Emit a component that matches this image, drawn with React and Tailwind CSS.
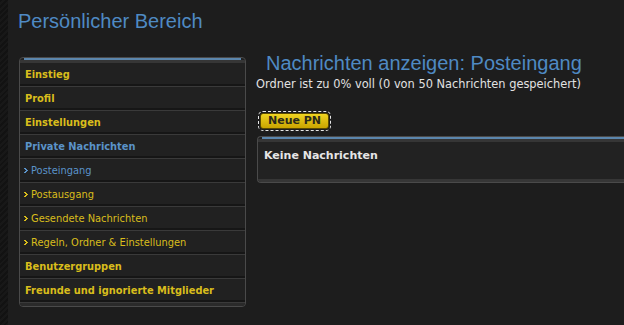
import React from "react";

const verd = { fontFamily: '"DejaVu Sans", Verdana, sans-serif' };
const treb = { fontFamily: '"Liberation Sans", Arial, sans-serif' };

function Marker({ color }) {
  return (
    <svg width="4" height="5" viewBox="0 0 4 5" className="shrink-0">
      <rect x="0" y="0" width="2" height="1" fill={color} />
      <rect x="1" y="1" width="2" height="1" fill={color} />
      <rect x="2" y="2" width="2" height="1" fill={color} />
      <rect x="1" y="3" width="2" height="1" fill={color} />
      <rect x="0" y="4" width="2" height="1" fill={color} />
    </svg>
  );
}

const items = [
  { t: "Einstieg", kind: "bold" },
  { t: "Profil", kind: "bold" },
  { t: "Einstellungen", kind: "bold" },
  { t: "Private Nachrichten", kind: "boldBlue" },
  { t: "Posteingang", kind: "subBlue" },
  { t: "Postausgang", kind: "sub" },
  { t: "Gesendete Nachrichten", kind: "sub" },
  { t: "Regeln, Ordner & Einstellungen", kind: "sub" },
  { t: "Benutzergruppen", kind: "bold" },
  { t: "Freunde und ignorierte Mitglieder", kind: "bold" },
];

function Row({ t, kind }) {
  const isSub = kind === "sub" || kind === "subBlue";
  const color =
    kind === "boldBlue" || kind === "subBlue" ? "text-[#5b93c9]" : "text-[#d9bd1c]";
  return (
    <div className="h-[24px] flex items-center pt-[1px] border-b border-[#3a3a3a] shadow-[inset_0_-2px_0_#161616]">
      {isSub ? (
        <div className="flex items-center pl-[4px] gap-[3px]">
          <Marker color={kind === "subBlue" ? "#5b93c9" : "#d9bd1c"} />
          <span className={`text-[9.9px] ${color}`} style={verd}>
            {t}
          </span>
        </div>
      ) : (
        <span className={`pl-[5px] text-[9.85px] font-bold ${color}`} style={verd}>
          {t}
        </span>
      )}
    </div>
  );
}

export default function App() {
  return (
    <div className="w-[624px] h-[325px] flex overflow-hidden bg-[#1d1d1d]">
      <div className="w-[8px] h-full shrink-0 bg-[repeating-linear-gradient(135deg,#121212_0px,#121212_2px,#181818_2px,#181818_4px)]" />
      <div className="flex-1 flex flex-col pl-[10px]">
        <h1 className="text-[20px] leading-[24px] text-[#4f8ac3] mt-[9px]" style={treb}>
          Persönlicher Bereich
        </h1>
        <div className="flex mt-[24px]">
          <div className="w-[227px] ml-[1px] shrink-0 rounded-[4px] border border-[#4a4a4a] bg-[#212121] overflow-hidden">
            <div className="h-[2px] bg-[#5b86ad] mx-[4px]" />
            <div className="h-[3px] bg-[#363636]" />
            {items.map((it) => (
              <Row key={it.t} {...it} />
            ))}
            <div className="h-[3px] bg-[#2a2a2a]" />
          </div>
          <div className="flex-1 ml-[10px] flex flex-col">
            <h2 className="text-[20px] leading-[24px] text-[#4f8ac3] pl-[10px] -mt-[6px]" style={treb}>
              Nachrichten anzeigen: Posteingang
            </h2>
            <p className="text-[11.4px] leading-[14px] text-[#e2e2e2] mt-[2px]" style={verd}>
              Ordner ist zu 0% voll (0 von 50 Nachrichten gespeichert)
            </p>
            <div className="mt-[20px] ml-[2px] flex">
              <div className="flex rounded-[5px] border border-dashed border-[#e8e8e8] p-[1px]">
                <div className="w-[69px] h-[16px] rounded-[3px] bg-[linear-gradient(#f0d421,#c9a400)] border border-[#5a4a00] flex items-center justify-center text-[11px] font-bold text-[#2a2a1a]" style={verd}>
                  Neue PN
                </div>
              </div>
            </div>
            <div className="mt-[5px] ml-[1px] rounded-l-[4px] border border-r-0 border-[#4a4a4a] bg-[#222222] overflow-hidden">
              <div className="h-[2px] bg-[#5b86ad] ml-[4px]" />
              <div className="h-[3px] bg-[#363636]" />
              <div className="h-[37px] pl-[6px] pt-[7px] text-[11px] leading-[14px] font-bold text-[#e6e6e6]" style={verd}>
                Keine Nachrichten
              </div>
              <div className="h-[3px] bg-[#363636]" />
            </div>
          </div>
        </div>
      </div>
    </div>
  );
}
